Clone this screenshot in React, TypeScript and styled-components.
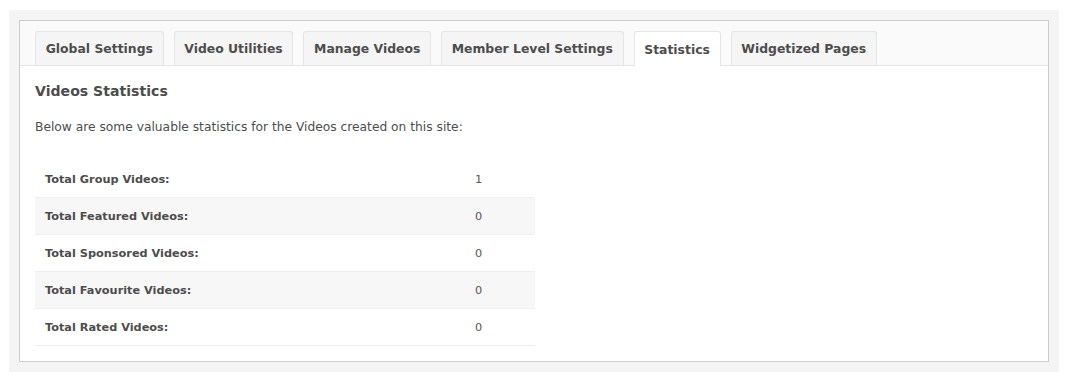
import React from 'react';
import styled, { createGlobalStyle } from 'styled-components';

const GlobalStyle = createGlobalStyle`
  html, body {
    margin: 0;
    padding: 0;
    background: #ffffff;
  }
  body {
    font-family: 'DejaVu Sans', Verdana, sans-serif;
    color: #555555;
  }
`;

const Page = styled.div`
  padding: 10px 9px 13px 9px;
`;

const Outer = styled.div`
  background: #f4f4f4;
  padding: 10px 10px 10px 10px;
`;

const Box = styled.div`
  background: #ffffff;
  border: 1px solid #cccccc;
`;

const TabBar = styled.div`
  display: flex;
  gap: 10px;
  padding: 10px 15px 0 15px;
  background: #fafafa;
  border-bottom: 1px solid #e5e5e5;
`;

const Tab = styled.div<{ $active?: boolean }>`
  padding: 0 9.7px;
  display: flex;
  align-items: center;
  box-sizing: border-box;
  border: 1px solid #e5e5e5;
  border-bottom: none;
  border-radius: 3px 3px 0 0;
  background: ${(p) => (p.$active ? '#ffffff' : '#f5f5f5')};
  margin-bottom: ${(p) => (p.$active ? '-1px' : '0')};
  height: ${(p) => (p.$active ? '35px' : '34px')};
  font-size: 12.4px;
  font-weight: bold;
  color: #4d4d4d;
  white-space: nowrap;
`;

const Content = styled.div`
  padding: 15px 15px 15px 15px;
`;

const Heading = styled.h3`
  margin: 0;
  font-size: 14.1px;
  font-weight: bold;
  color: #4d4d4d;
  line-height: 21px;
`;

const Description = styled.p`
  margin: 17px 0 26px 0;
  font-size: 12.25px;
  line-height: 16px;
  color: #4d4d4d;
`;

const StatsTable = styled.table`
  width: 500px;
  border-collapse: collapse;
`;

const StatRow = styled.tr<{ $striped?: boolean }>`
  background: ${(p) => (p.$striped ? '#f7f7f7' : '#ffffff')};
  border-bottom: 1px solid #eeeeee;
`;

const Label = styled.td`
  height: 36px;
  padding: 0 0 0 10px;
  width: 430px;
  font-size: 11.3px;
  font-weight: bold;
  color: #4d4d4d;
`;

const Value = styled.td`
  padding: 0;
  font-size: 11.3px;
  color: #555555;
`;

const tabs = [
  'Global Settings',
  'Video Utilities',
  'Manage Videos',
  'Member Level Settings',
  'Statistics',
  'Widgetized Pages',
];

const stats = [
  { label: 'Total Group Videos:', value: '1' },
  { label: 'Total Featured Videos:', value: '0' },
  { label: 'Total Sponsored Videos:', value: '0' },
  { label: 'Total Favourite Videos:', value: '0' },
  { label: 'Total Rated Videos:', value: '0' },
];

const App: React.FC = () => {
  return (
    <Page>
      <GlobalStyle />
      <Outer>
        <Box>
          <TabBar>
            {tabs.map((t) => (
              <Tab key={t} $active={t === 'Statistics'}>
                {t}
              </Tab>
            ))}
          </TabBar>
          <Content>
            <Heading>Videos Statistics</Heading>
            <Description>
              Below are some valuable statistics for the Videos created on this site:
            </Description>
            <StatsTable>
              <tbody>
                {stats.map((s, i) => (
                  <StatRow key={s.label} $striped={i % 2 === 1}>
                    <Label>{s.label}</Label>
                    <Value>{s.value}</Value>
                  </StatRow>
                ))}
              </tbody>
            </StatsTable>
          </Content>
        </Box>
      </Outer>
    </Page>
  );
};

export default App;
